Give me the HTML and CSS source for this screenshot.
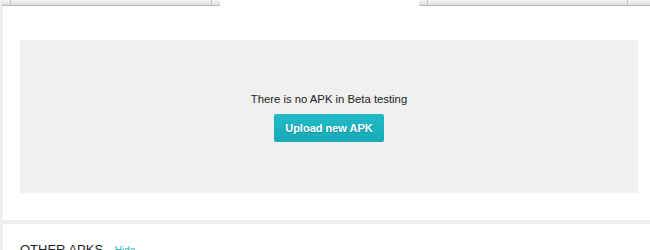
FILE: index.html
```html
<!DOCTYPE html>
<html lang="en">
<head>
    <meta charset="UTF-8">
    <title>Beta testing</title>
    <link rel="stylesheet" href="styles.css">
</head>
<body>
    <div class="page">
        <div class="panel beta-panel">
            <div class="tab-row">
                <div class="tab tab-left"><span class="divider"></span><span class="divider"></span></div>
                <div class="tab tab-right"><span class="divider"></span><span class="divider"></span></div>
            </div>

            <div class="empty-state">
                <p class="empty-text">There is no APK in Beta testing</p>
                <button class="btn btn-primary">Upload new APK</button>
            </div>
        </div>

        <div class="panel other-panel">
            <h2 class="section-title">OTHER APKS <a href="#" class="toggle-link">Hide</a></h2>
        </div>
    </div>
</body>
</html>
```

FILE: styles.css
```css
:root {
    --primary-color: #1fb6c4;
    --primary-dark: #18a9b7;
    --page-bg: #eeeeee;
    --box-bg: #f0f0f0;
    --text-color: #222;
}

* {
    margin: 0;
    padding: 0;
    box-sizing: border-box;
}

body {
    font-family: "Liberation Sans", Arial, sans-serif;
    background-color: var(--page-bg);
    color: var(--text-color);
    overflow: hidden;
}

.page {
    padding-left: 3px;
    display: flex;
    flex-direction: column;
    gap: 4px;
}

.panel {
    background-color: white;
}

.beta-panel {
    height: 220px;
}

.tab-row {
    display: flex;
    justify-content: space-between;
    height: 6px;
    margin-left: -1px;
}

.tab {
    display: flex;
    justify-content: space-between;
    height: 6px;
    background: linear-gradient(#f6f6f6, #dcdcdc);
    border-bottom: 1px solid #b9b9b9;
}

.tab-left {
    width: 218px;
    padding: 0 8px 0 8px;
}

.tab-right {
    width: 231px;
    padding: 0 22px 0 8px;
}

.divider {
    width: 1px;
    background-color: #c4c4c4;
}

.empty-state {
    margin: 34px 12px 0 17px;
    height: 153px;
    background-color: var(--box-bg);
    display: flex;
    flex-direction: column;
    align-items: center;
    justify-content: center;
    gap: 8px;
}

.empty-text {
    font-size: 11.3px;
    line-height: 14px;
    color: #222;
}

.btn {
    border: none;
    border-radius: 2px;
    cursor: pointer;
    font-family: inherit;
}

.btn-primary {
    width: 110px;
    height: 28px;
    font-size: 11px;
    font-weight: bold;
    color: white;
    background: linear-gradient(#22bac8, var(--primary-dark));
    text-shadow: 0 1px 1px rgba(0,0,0,0.2);
}

.other-panel {
    height: 40px;
    padding: 18px 0 0 17px;
}

.section-title {
    font-size: 13px;
    font-weight: normal;
    color: #222;
    line-height: 16px;
}

.toggle-link {
    margin-left: 8px;
    font-size: 10px;
    color: var(--primary-color);
    text-decoration: none;
}
```
